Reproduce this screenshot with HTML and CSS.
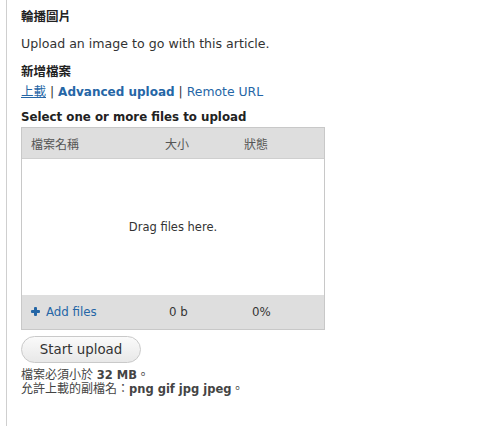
FILE: index.html
```html
<!DOCTYPE html>
<html lang="zh-Hant">
<head>
<meta charset="utf-8">
<link rel="stylesheet" href="styles.css">
</head>
<body>
<div class="panel">
  <div class="field-label">輪播圖片</div>
  <p class="desc">Upload an image to go with this article.</p>
  <div class="sub-label">新增檔案</div>
  <div class="methods"><a class="link active" href="#">上載</a> <span class="sep">|</span> <a class="link strong" href="#">Advanced upload</a> <span class="sep">|</span> <a class="link" href="#">Remote URL</a></div>
  <div class="select-title">Select one or more files to upload</div>
  <div class="uploader">
    <div class="row head">
      <span class="c-name">檔案名稱</span>
      <span class="c-size">大小</span>
      <span class="c-status">狀態</span>
    </div>
    <div class="drop">Drag files here.</div>
    <div class="row foot">
      <span class="c-name"><a class="add" href="#"><span class="plus"></span>Add files</a></span>
      <span class="c-size">0 b</span>
      <span class="c-status">0%</span>
    </div>
  </div>
  <button class="start" type="button">Start upload</button>
  <div class="help">
    <div>檔案必須小於 <b>32 MB</b>。</div>
    <div>允許上載的副檔名：<b>png gif jpg jpeg</b>。</div>
  </div>
</div>
</body>
</html>
```

FILE: styles.css
```css
html, body {
  margin: 0;
  padding: 0;
  background: #fff;
}
body {
  font-family: "DejaVu Sans", "Noto Sans CJK TC", sans-serif;
  font-size: 12px;
  color: #333;
}
.panel {
  margin-left: 6px;
  border-left: 1px solid #cfcfcf;
  padding: 8px 0 0 14px;
  min-height: 418px;
}
.field-label {
  font-size: 12.5px;
  line-height: 18px;
  font-weight: 600;
  color: #222;
}
.desc {
  margin: 9px 0 0;
  font-size: 12.6px;
  line-height: 18px;
  color: #333;
}
.sub-label {
  margin-top: 10px;
  font-size: 12.5px;
  line-height: 18px;
  font-weight: 600;
  color: #222;
}
.methods {
  margin-top: 2px;
  line-height: 18px;
  font-size: 12.4px;
}
.link {
  color: #2566a6;
  text-decoration: none;
}
.link.active {
  text-decoration: underline;
  font-size: 12.5px;
}
.link.strong {
  font-weight: 700;
  font-size: 12px;
}
.sep {
  color: #333;
}
.select-title {
  margin-top: 7px;
  font-size: 11.8px;
  line-height: 18px;
  font-weight: 700;
  color: #222;
}
.uploader {
  margin-top: 1px;
  width: 302px;
  border: 1px solid #c8c8c8;
  background: #fff;
}
.row {
  display: grid;
  grid-template-columns: 134px 79px 1fr;
  align-items: center;
  padding-left: 9px;
  background: #dedede;
}
.row.head {
  height: 30px;
  border-bottom: 1px solid #cfcfcf;
  color: #555;
  font-size: 12px;
}
.row.foot {
  height: 34px;
  color: #333;
  font-size: 11.8px;
}
.foot .c-size { padding-left: 4px; }
.foot .c-status { padding-left: 8px; }
.drop {
  height: 136px;
  display: flex;
  align-items: center;
  justify-content: center;
  color: #333;
  font-size: 11.5px;
}
.add {
  color: #2566a6;
  text-decoration: none;
  display: inline-flex;
  align-items: center;
}
.plus {
  position: relative;
  width: 9px;
  height: 9px;
  margin-right: 6px;
  display: inline-block;
}
.plus::before, .plus::after {
  content: "";
  position: absolute;
  background: #2566a6;
  border-radius: 1px;
}
.plus::before { left: 0; top: 3px; width: 9px; height: 3px; }
.plus::after { left: 3px; top: 0; width: 3px; height: 9px; }
.start {
  margin-top: 6px;
  display: block;
  width: 120px;
  height: 27px;
  border: 1px solid #c9c9c9;
  border-radius: 14px;
  background: linear-gradient(#fafafa, #e8e8e8);
  font-family: "DejaVu Sans", sans-serif;
  font-size: 13.4px;
  color: #333;
  padding: 0;
}
.help {
  margin-top: 5px;
  font-size: 12px;
  line-height: 14px;
  color: #444;
}
.help b {
  font-weight: 700;
  font-size: 11.5px;
}
```
